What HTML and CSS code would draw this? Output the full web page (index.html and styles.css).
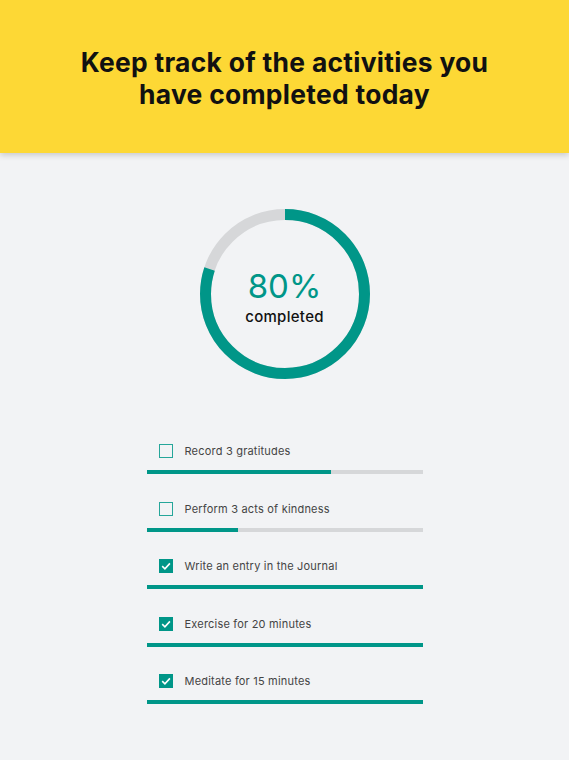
FILE: index.html
```html
<!DOCTYPE html>
<html lang="en">
<head>
<meta charset="utf-8">
<title>Activities</title>
<link rel="stylesheet" href="styles.css">
</head>
<body>
<header class="hero">
  <h1 class="hero-title">Keep track of the activities you<br>have completed today</h1>
</header>
<main class="content">
  <div class="ring">
    <svg class="ring-svg" width="170" height="170" viewBox="0 0 170 170">
      <circle class="ring-track" cx="85" cy="85" r="79.5"/>
      <circle class="ring-fill" cx="85" cy="85" r="79.5" stroke-dasharray="399.6 499.5" transform="rotate(-90 85 85)"/>
    </svg>
    <div class="ring-label">
      <span class="ring-pct">80%</span>
      <span class="ring-sub">completed</span>
    </div>
  </div>
  <ul class="tasks">
    <li class="task">
      <div class="task-row"><span class="box"></span><span class="task-text">Record 3 gratitudes</span></div>
      <div class="bar"><div class="bar-fill" style="width:66.7%"></div></div>
    </li>
    <li class="task">
      <div class="task-row"><span class="box"></span><span class="task-text">Perform 3 acts of kindness</span></div>
      <div class="bar"><div class="bar-fill" style="width:33.3%"></div></div>
    </li>
    <li class="task">
      <div class="task-row"><span class="box checked"><svg viewBox="0 0 14 14" width="14" height="14"><path d="M3.2 7.2 L5.9 9.8 L10.9 4.4" fill="none" stroke="#fff" stroke-width="1.6"/></svg></span><span class="task-text">Write an entry in the Journal</span></div>
      <div class="bar"><div class="bar-fill" style="width:100%"></div></div>
    </li>
    <li class="task">
      <div class="task-row"><span class="box checked"><svg viewBox="0 0 14 14" width="14" height="14"><path d="M3.2 7.2 L5.9 9.8 L10.9 4.4" fill="none" stroke="#fff" stroke-width="1.6"/></svg></span><span class="task-text">Exercise for 20 minutes</span></div>
      <div class="bar"><div class="bar-fill" style="width:100%"></div></div>
    </li>
    <li class="task">
      <div class="task-row"><span class="box checked"><svg viewBox="0 0 14 14" width="14" height="14"><path d="M3.2 7.2 L5.9 9.8 L10.9 4.4" fill="none" stroke="#fff" stroke-width="1.6"/></svg></span><span class="task-text">Meditate for 15 minutes</span></div>
      <div class="bar"><div class="bar-fill" style="width:100%"></div></div>
    </li>
  </ul>
</main>
</body>
</html>
```
FILE: styles.css
```css
* { box-sizing: border-box; }
html, body { margin: 0; padding: 0; }
body {
  background: #f2f3f5;
  font-family: "Inter", "Open Sans", sans-serif;
  color: #222;
  min-height: 760px;
}
.hero {
  background: #fdd835;
  height: 153px;
  display: flex;
  align-items: center;
  justify-content: center;
  box-shadow: 0 2px 6px rgba(0,0,0,0.18);
  position: relative;
  z-index: 1;
}
.hero-title {
  margin: 0;
  padding-top: 2px;
  text-align: center;
  font-size: 26.4px;
  line-height: 32px;
  font-weight: 700;
  color: #111;
  letter-spacing: 0.3px;
}
.content {
  display: flex;
  flex-direction: column;
  align-items: center;
  padding-top: 56px;
}
.ring {
  width: 170px;
  height: 170px;
  display: grid;
  place-items: center;
}
.ring-svg, .ring-label { grid-area: 1 / 1; }
.ring-track { fill: none; stroke: #d6d7d9; stroke-width: 11; }
.ring-fill { fill: none; stroke: #009688; stroke-width: 11; }
.ring-label {
  display: flex;
  flex-direction: column;
  align-items: center;
  padding-top: 8px;
}
.ring-pct {
  font-size: 33px;
  line-height: 34px;
  font-weight: 400;
  color: #009688;
}
.ring-sub {
  font-size: 15px;
  line-height: 20px;
  font-weight: 500;
  color: #111;
  margin-top: 4px;
  letter-spacing: 0.3px;
}
.tasks {
  list-style: none;
  margin: 65px 0 0;
  padding: 0;
  width: 276px;
  display: flex;
  flex-direction: column;
  gap: 27.5px;
}
.task { display: flex; flex-direction: column; gap: 12px; }
.task-row {
  display: flex;
  align-items: center;
  gap: 12px;
  padding-left: 12px;
  height: 14px;
}
.box {
  width: 14px;
  height: 14px;
  border: 1.5px solid #26a69a;
  display: block;
  flex: none;
}
.box.checked {
  background: #009688;
  border: none;
}
.box svg { display: block; }
.task-text {
  font-size: 11px;
  color: #444;
  letter-spacing: 0.2px;
}
.bar {
  height: 4px;
  background: #d6d7d9;
}
.bar-fill {
  height: 100%;
  background: #009688;
}
```
